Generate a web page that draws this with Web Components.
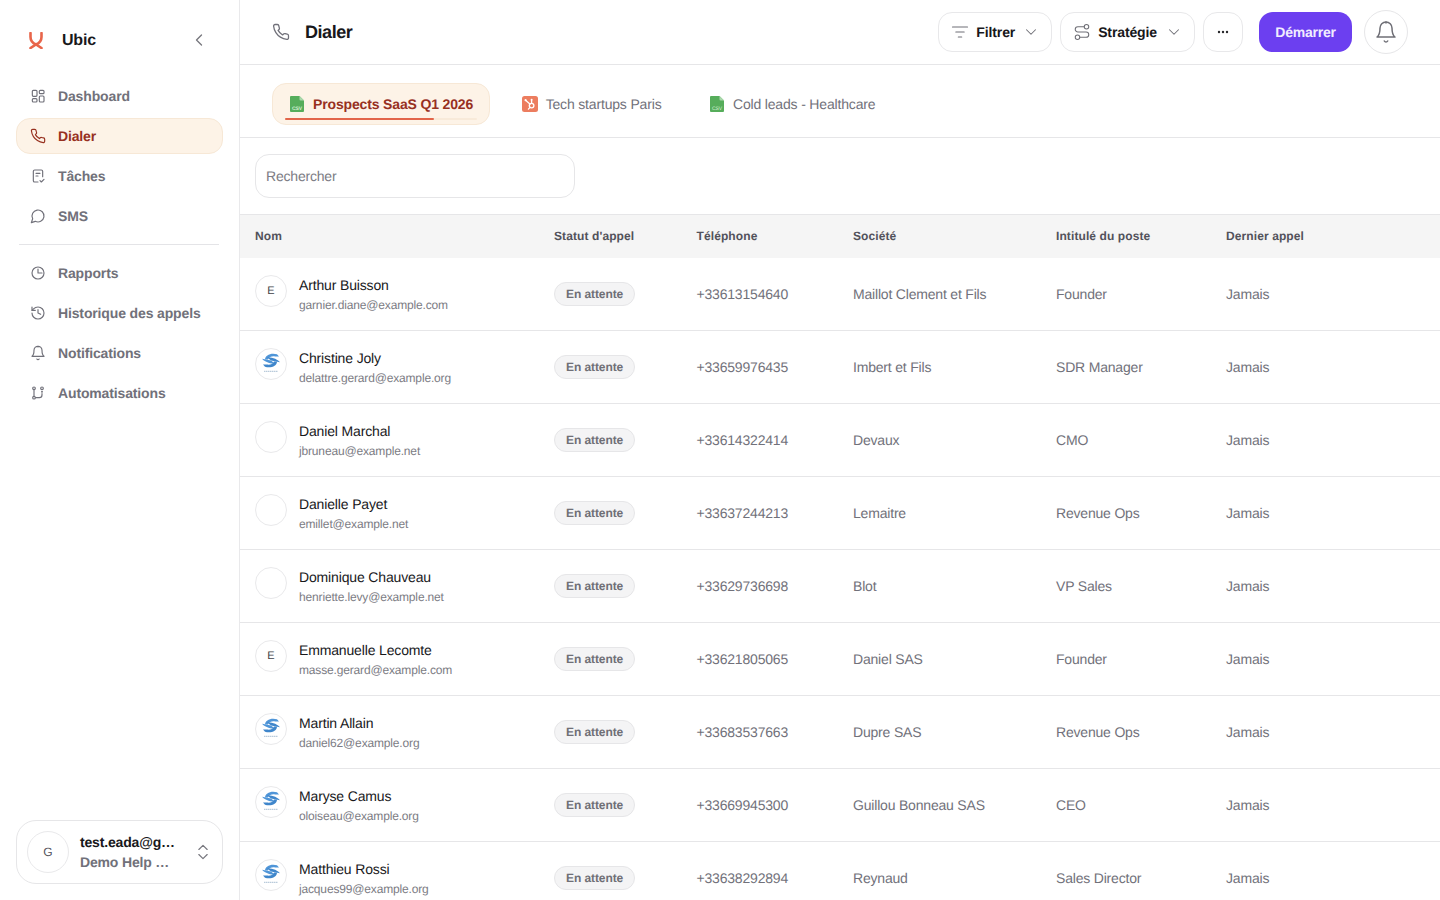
<!DOCTYPE html>
<html lang="fr"><head><meta charset="utf-8"><title>Dialer</title>
<style>
html,body{margin:0;height:100%;overflow:hidden;background:#fff;font-family:"Liberation Sans",Arial,sans-serif;text-rendering:geometricPrecision;}
</style></head>
<body>
<ub-app></ub-app>
<script>
const ICONS={
 dashboard:'<rect x="3.5" y="3.5" width="7" height="9" rx="1.5"/><rect x="14" y="3.5" width="7" height="5" rx="1.5"/><rect x="14" y="12" width="7" height="9" rx="1.5"/><rect x="3.5" y="16" width="7" height="5" rx="1.5"/>',
 phone:'<path d="M22 16.92v3a2 2 0 0 1-2.18 2 19.79 19.79 0 0 1-8.63-3.07 19.5 19.5 0 0 1-6-6 19.79 19.79 0 0 1-3.07-8.67A2 2 0 0 1 4.11 2h3a2 2 0 0 1 2 1.72 12.84 12.84 0 0 0 .7 2.81 2 2 0 0 1-.45 2.11L8.09 9.91a16 16 0 0 0 6 6l1.27-1.27a2 2 0 0 1 2.11-.45 12.84 12.84 0 0 0 2.81.7A2 2 0 0 1 22 16.92z"/>',
 tasks:'<path d="M12 21H7a2 2 0 0 1-2-2V5a2 2 0 0 1 2-2h10a2 2 0 0 1 2 2v8"/><path d="M9 8h6M9 12h3"/><path d="m15 19 2 2 4-4"/>',
 sms:'<path d="M7.9 20A9 9 0 1 0 4 16.1L2 22Z"/>',
 reports:'<circle cx="12" cy="12" r="9"/><path d="M12 6v6h6"/>',
 history:'<path d="M3 12a9 9 0 1 0 9-9 9.75 9.75 0 0 0-6.74 2.74L3 8"/><path d="M3 3v5h5"/><path d="M12 7v5l4 2"/>',
 bell:'<path d="M6 8a6 6 0 0 1 12 0c0 7 3 9 3 9H3s3-2 3-9"/><path d="M10.3 21a1.94 1.94 0 0 0 3.4 0"/><path d="M12 2v1"/>',
 auto:'<circle cx="6" cy="5" r="2"/><circle cx="6" cy="19" r="2"/><circle cx="18" cy="5" r="2"/><path d="M6 7.5v9"/><path d="M8.5 19H14a4 4 0 0 0 4-4v-2"/><circle cx="18" cy="10" r=".6"/>',
 updown:'<path d="m7 15 5 5 5-5"/><path d="m7 9 5-5 5 5"/>',
 left:'<path d="m15 18-6-6 6-6"/>',
 down:'<path d="m6 9 6 6 6-6"/>',
 filter:'<path d="M3 6h18M7 12h10M10 18h4"/>',
 route:'<circle cx="6" cy="19" r="3"/><path d="M9 19h8.5a3.5 3.5 0 0 0 0-7h-11a3.5 3.5 0 0 1 0-7H15"/><circle cx="18" cy="5" r="3"/>'
};
class UbIcon extends HTMLElement{
 connectedCallback(){
  const s=this.getAttribute('size')||16,w=this.getAttribute('stroke')||2;
  this.attachShadow({mode:'open'}).innerHTML=`<style>:host{display:inline-flex;flex:none;width:${s}px;height:${s}px}svg{display:block}</style><svg width="${s}" height="${s}" viewBox="0 0 24 24" fill="none" stroke="currentColor" stroke-width="${w}" stroke-linecap="round" stroke-linejoin="round">${ICONS[this.getAttribute('name')]}</svg>`;
 }
}
customElements.define('ub-icon',UbIcon);

class UbCsv extends HTMLElement{
 connectedCallback(){
  this.attachShadow({mode:'open'}).innerHTML=`<style>:host{display:inline-flex;flex:none;width:14px;height:16px}svg{display:block}</style><svg width="14" height="16" viewBox="0 0 14 16"><path d="M1 0h8.5L14 4.5V15a1 1 0 0 1-1 1H1a1 1 0 0 1-1-1V1a1 1 0 0 1 1-1z" fill="#56ad5b"/><path d="M9.5 0 14 4.5H10.5a1 1 0 0 1-1-1z" fill="#a9d8ab"/><text x="7" y="13.6" font-size="5" text-anchor="middle" fill="#d5efd6" font-family="Liberation Sans,sans-serif">CSV</text></svg>`;
 }
}
customElements.define('ub-csv',UbCsv);

class UbHubspot extends HTMLElement{
 connectedCallback(){
  this.attachShadow({mode:'open'}).innerHTML=`<style>:host{display:inline-flex;flex:none;width:16px;height:16px;margin-right:-1px}svg{display:block}</style><svg width="16" height="16" viewBox="0 0 16 16"><rect width="16" height="16" rx="2.5" fill="#ec7d5f"/><g fill="none" stroke="#fff" stroke-width="1.3" stroke-linecap="round"><circle cx="9.6" cy="9.6" r="2.3"/><path d="M9.6 7.2V4.4"/><path d="M7.9 8 3.9 4.6"/><path d="m8 11.4-1.6 1.7"/></g><circle cx="3.6" cy="4.2" r="1.1" fill="#fff"/><circle cx="9.6" cy="3.8" r="1" fill="#fff"/></svg>`;
 }
}
customElements.define('ub-hubspot',UbHubspot);

class UbNavItem extends HTMLElement{
 connectedCallback(){
  this.attachShadow({mode:'open'}).innerHTML=`<style>
  :host{display:flex;align-items:center;gap:12px;height:36px;padding:0 13px;box-sizing:border-box;border:1px solid transparent;border-radius:14px;font-size:14px;font-weight:700;color:#71717a;letter-spacing:-.14px}
  :host([active]){background:#fdf3e7;border-color:#f7e8d6;color:#97301f}
  </style><ub-icon name="${this.getAttribute('icon')}" size="16" stroke="1.75"></ub-icon><slot></slot>`;
 }
}
customElements.define('ub-nav-item',UbNavItem);

class UbSidebar extends HTMLElement{
 connectedCallback(){
  this.attachShadow({mode:'open'}).innerHTML=`<style>
  :host{display:flex;flex-direction:column;flex:none;width:240px;height:900px;box-sizing:border-box;border-right:1px solid #e9e9eb;padding:0 16px 16px}
  .brand{display:flex;align-items:center;height:80px;padding:0 0 0 11px;flex:none}
  .brand svg{display:block;flex:none}
  .brand b{margin:2px 0 0 17px;font-size:16px;font-weight:700;color:#18181b;flex:1;letter-spacing:-.2px}
  .brand ub-icon{color:#77777e;margin-right:14px}
  nav{display:flex;flex-direction:column;gap:4px;margin-top:-2px}
  hr{border:0;border-top:1px solid #e4e4e7;margin:10px 4px 10px 3px}
  .card{margin-top:auto;height:64px;box-sizing:border-box;border:1px solid #e6e6e8;border-radius:20px;display:flex;align-items:center;padding:0 10px}
  .av{width:42px;height:42px;box-sizing:border-box;border:1px solid #e9e9eb;border-radius:50%;display:flex;align-items:center;justify-content:center;font-size:12px;color:#52525b;flex:none}
  .t{margin-left:11px;font-size:14px;line-height:20px;font-weight:700;white-space:nowrap;letter-spacing:-.17px}
  .t .a{color:#18181b}.t .b{color:#71717a}
  .card ub-icon{margin-left:auto;margin-right:-1px;color:#77777e}
  </style>
  <div class="brand"><svg width="18" height="17" viewBox="0 0 18 17" fill="none" stroke="#e8654a" stroke-width="2.6" stroke-linecap="round"><path d="M3.5 1v4c0 4 2 6 5.5 7.5L14.5 16"/><path d="M14.5 1v4c0 4-2 6-5.5 7.5L3.5 16"/></svg><b>Ubic</b><ub-icon name="left" size="20" stroke="1.6"></ub-icon></div>
  <nav>
   <ub-nav-item icon="dashboard">Dashboard</ub-nav-item>
   <ub-nav-item icon="phone" active>Dialer</ub-nav-item>
   <ub-nav-item icon="tasks">Tâches</ub-nav-item>
   <ub-nav-item icon="sms">SMS</ub-nav-item>
  </nav><hr>
  <nav style="margin-top:0">
   <ub-nav-item icon="reports">Rapports</ub-nav-item>
   <ub-nav-item icon="history">Historique des appels</ub-nav-item>
   <ub-nav-item icon="bell">Notifications</ub-nav-item>
   <ub-nav-item icon="auto">Automatisations</ub-nav-item>
  </nav>
  <div class="card"><div class="av">G</div><div class="t"><div class="a">test.eada@g…</div><div class="b">Demo Help …</div></div><ub-icon name="updown" size="20" stroke="1.4"></ub-icon></div>`;
 }
}
customElements.define('ub-sidebar',UbSidebar);

class UbButton extends HTMLElement{
 connectedCallback(){
  const i=this.getAttribute('icon'),r=i==='route',s=r?18:20;
  this.attachShadow({mode:'open'}).innerHTML=`<style>
  :host{display:inline-flex;align-items:center;height:40px;box-sizing:border-box;border:1px solid #e8e8ea;border-radius:14px;padding:0 11px;font-size:14px;font-weight:700;color:#18181b;background:#fff;letter-spacing:-.12px}
  .i{color:#6f6f76;margin:0 ${r?7:6}px 0 ${r?1:0}px}.c{color:#6f6f76;margin-left:${r?8:7}px}
  </style><ub-icon class="i" name="${i}" size="${s}" stroke="1.4"></ub-icon><slot></slot><ub-icon class="c" name="down" size="18" stroke="1.4"></ub-icon>`;
 }
}
customElements.define('ub-button',UbButton);

class UbTopbar extends HTMLElement{
 connectedCallback(){
  this.attachShadow({mode:'open'}).innerHTML=`<style>
  :host{display:flex;align-items:center;height:65px;box-sizing:border-box;border-bottom:1px solid #e6e6e8;padding:0 32px;flex:none}
  .ph{color:#71717a}
  h1{margin:0 0 0 15px;font-size:18px;font-weight:700;color:#18181b;flex:1;line-height:22px;letter-spacing:-.45px}
  .g{display:flex;align-items:center;gap:8px}
  .more{width:40px;height:40px;box-sizing:border-box;border:1px solid #e8e8ea;border-radius:14px;display:flex;align-items:center;justify-content:center}
  .more svg{display:block}
  .go{margin-left:8px;height:40px;width:93px;border-radius:14px;background:#6c3ff0;color:#f1ecff;font-size:14px;font-weight:700;display:flex;align-items:center;justify-content:center;box-sizing:border-box;letter-spacing:-.25px}
  .bell{margin-left:4px;width:44px;height:44px;box-sizing:border-box;border:1px solid #e6e6e8;border-radius:50%;display:flex;align-items:center;justify-content:center;color:#6f6f76}
  </style>
  <ub-icon class="ph" name="phone" size="18" stroke="1.7"></ub-icon><h1>Dialer</h1>
  <div class="g"><ub-button icon="filter">Filtrer</ub-button><ub-button icon="route">Stratégie</ub-button>
  <div class="more"><svg width="12" height="4" viewBox="0 0 12 4" fill="#27272a"><circle cx="2" cy="2" r="1.2"/><circle cx="6" cy="2" r="1.2"/><circle cx="10" cy="2" r="1.2"/></svg></div>
  <div class="go">Démarrer</div><div class="bell"><ub-icon name="bell" size="24" stroke="1.5"></ub-icon></div></div>`;
 }
}
customElements.define('ub-topbar',UbTopbar);

class UbTab extends HTMLElement{
 connectedCallback(){
  this.attachShadow({mode:'open'}).innerHTML=`<style>
  :host{display:inline-flex;position:relative;align-items:center;gap:9px;height:42px;box-sizing:border-box;padding:0 16px 0 17px;border:1px solid transparent;border-radius:14px;font-size:14px;color:#71717a;letter-spacing:-.17px}
  :host([active]){background:#fdf3e7;border-color:#f7e8d6;color:#97301f;font-weight:700;letter-spacing:-.15px}
  .bar{display:none;position:absolute;left:12px;right:12px;bottom:4px;height:2px;background:#f8ead9;border-radius:1px}
  .bar i{display:block;width:77.6%;height:100%;background:#e2654a;border-radius:1px}
  :host([active]) .bar{display:block}
  </style><slot name="icon"></slot><slot></slot><div class="bar"><i></i></div>`;
 }
}
customElements.define('ub-tab',UbTab);

class UbTabs extends HTMLElement{
 connectedCallback(){
  this.attachShadow({mode:'open'}).innerHTML=`<style>
  :host{display:flex;align-items:center;gap:13.5px;height:73px;box-sizing:border-box;border-bottom:1px solid #e6e6e8;padding:6px 32px 0;flex:none}
  </style><slot></slot>`;
 }
}
customElements.define('ub-tabs',UbTabs);

const COLS='299px 142.5px 156.5px 203px 170px 1fr';
class UbHead extends HTMLElement{
 connectedCallback(){
  const h=["Nom","Statut d'appel","Téléphone","Société","Intitulé du poste","Dernier appel"];
  this.attachShadow({mode:'open'}).innerHTML=`<style>
  :host{display:grid;flex:none;grid-template-columns:${COLS};align-items:center;height:44px;box-sizing:border-box;background:#f5f5f5;border-top:1px solid #e6e6e8;padding:0 0 2px 15px;font-size:12px;font-weight:700;color:#52525b;letter-spacing:.1px}
  </style>${h.map(x=>`<div>${x}</div>`).join('')}`;
 }
}
customElements.define('ub-head',UbHead);

const LOGO=`<svg width="24" height="24" viewBox="0 0 24 24" fill="none"><g transform="translate(12 8.5) scale(1 .9) translate(-12 -12)" fill="#4f95d8"><path d="M6 11C6 6 12 3 18 5L20 7.5 16 7.5C13 7 10 8 9 11Z"/><path d="M3 10 12 12 16 15.5C12 15.5 7 14.5 3 10Z"/><path d="M21 14 12 12 8 8.5C12 8.5 17 9.5 21 14Z" fill="#3f86cb"/><path d="M6 11C6 6 12 3 18 5L20 7.5 16 7.5C13 7 10 8 9 11Z" transform="rotate(180 12 12)" fill="#3f86cb"/></g><path d="M5 19.3h14" stroke="#a9bfd2" stroke-width="1" stroke-dasharray="1.5 .5"/></svg>`;
class UbRow extends HTMLElement{
 connectedCallback(){
  const g=n=>this.getAttribute(n),av=g('av');
  const inner=av==='logo'?LOGO:(av||'');
  this.attachShadow({mode:'open'}).innerHTML=`<style>
  :host{display:grid;grid-template-columns:${COLS};align-items:center;height:73px;box-sizing:border-box;border-bottom:1px solid #e6e6e8;padding-left:15px;font-size:14px;color:#71717a;flex:none;letter-spacing:-.19px}
  .n{display:flex;align-items:center;gap:12px}
  .av{width:32px;height:32px;box-sizing:border-box;border:1px solid #e9e9eb;border-radius:50%;display:flex;align-items:center;justify-content:center;font-size:11px;color:#3f3f46;margin-bottom:6px;flex:none;letter-spacing:0}
  .av svg{display:block}
  .tx{margin-bottom:1px}
  .nm{color:#18181b;line-height:20px;letter-spacing:-.15px}
  .em{font-size:12px;line-height:16px;margin-top:2px;color:#7c7c84;letter-spacing:-.16px}
  .st{display:inline-flex;align-items:center;height:24px;box-sizing:border-box;border:1px solid #e6e6e8;background:#f4f4f5;border-radius:12px;padding:0 11px;font-size:12px;font-weight:700;color:#6f6f76;letter-spacing:-.08px}
  </style>
  <div class="n"><div class="av">${inner}</div><div class="tx"><div class="nm">${g('name')}</div><div class="em">${g('email')}</div></div></div>
  <div><span class="st">En attente</span></div>
  <div>${g('phone')}</div><div>${g('company')}</div><div>${g('job')}</div><div>Jamais</div>`;
 }
}
customElements.define('ub-row',UbRow);

class UbSearch extends HTMLElement{
 connectedCallback(){
  this.attachShadow({mode:'open'}).innerHTML=`<style>
  :host{display:flex;flex:none;align-items:flex-start;height:76px;box-sizing:border-box;padding:16px 0 0 15px}
  .b{width:320px;height:44px;box-sizing:border-box;border:1px solid #e6e6e8;border-radius:14px;display:flex;align-items:center;padding:0 10px;font-size:14px;color:#7c7c84;letter-spacing:-.2px}
  </style><div class="b">Rechercher</div>`;
 }
}
customElements.define('ub-search',UbSearch);

const ROWS=[
["E","Arthur Buisson","garnier.diane@example.com","+33613154640","Maillot Clement et Fils","Founder"],
["logo","Christine Joly","delattre.gerard@example.org","+33659976435","Imbert et Fils","SDR Manager"],
["","Daniel Marchal","jbruneau@example.net","+33614322414","Devaux","CMO"],
["","Danielle Payet","emillet@example.net","+33637244213","Lemaitre","Revenue Ops"],
["","Dominique Chauveau","henriette.levy@example.net","+33629736698","Blot","VP Sales"],
["E","Emmanuelle Lecomte","masse.gerard@example.com","+33621805065","Daniel SAS","Founder"],
["logo","Martin Allain","daniel62@example.org","+33683537663","Dupre SAS","Revenue Ops"],
["logo","Maryse Camus","oloiseau@example.org","+33669945300","Guillou Bonneau SAS","CEO"],
["logo","Matthieu Rossi","jacques99@example.org","+33638292894","Reynaud","Sales Director"]];

class UbApp extends HTMLElement{
 connectedCallback(){
  const root=this.attachShadow({mode:'open'});
  root.innerHTML=`<style>
  :host{display:flex;width:1440px;height:900px;overflow:hidden;background:#fff}
  main{flex:1;min-width:0;display:flex;flex-direction:column;overflow:hidden}
  #rows{flex:none}
  </style><ub-sidebar></ub-sidebar><main>
  <ub-topbar></ub-topbar>
  <ub-tabs>
   <ub-tab active><ub-csv slot="icon"></ub-csv>Prospects SaaS Q1 2026</ub-tab>
   <ub-tab><ub-hubspot slot="icon"></ub-hubspot>Tech startups Paris</ub-tab>
   <ub-tab><ub-csv slot="icon"></ub-csv>Cold leads - Healthcare</ub-tab>
  </ub-tabs>
  <ub-search></ub-search><ub-head></ub-head><div id="rows"></div></main>`;
  const box=root.getElementById('rows');
  ROWS.forEach(r=>{const e=document.createElement('ub-row');
   ['av','name','email','phone','company','job'].forEach((k,i)=>e.setAttribute(k,r[i]));box.append(e);});
 }
}
customElements.define('ub-app',UbApp);
</script>
</body></html>
